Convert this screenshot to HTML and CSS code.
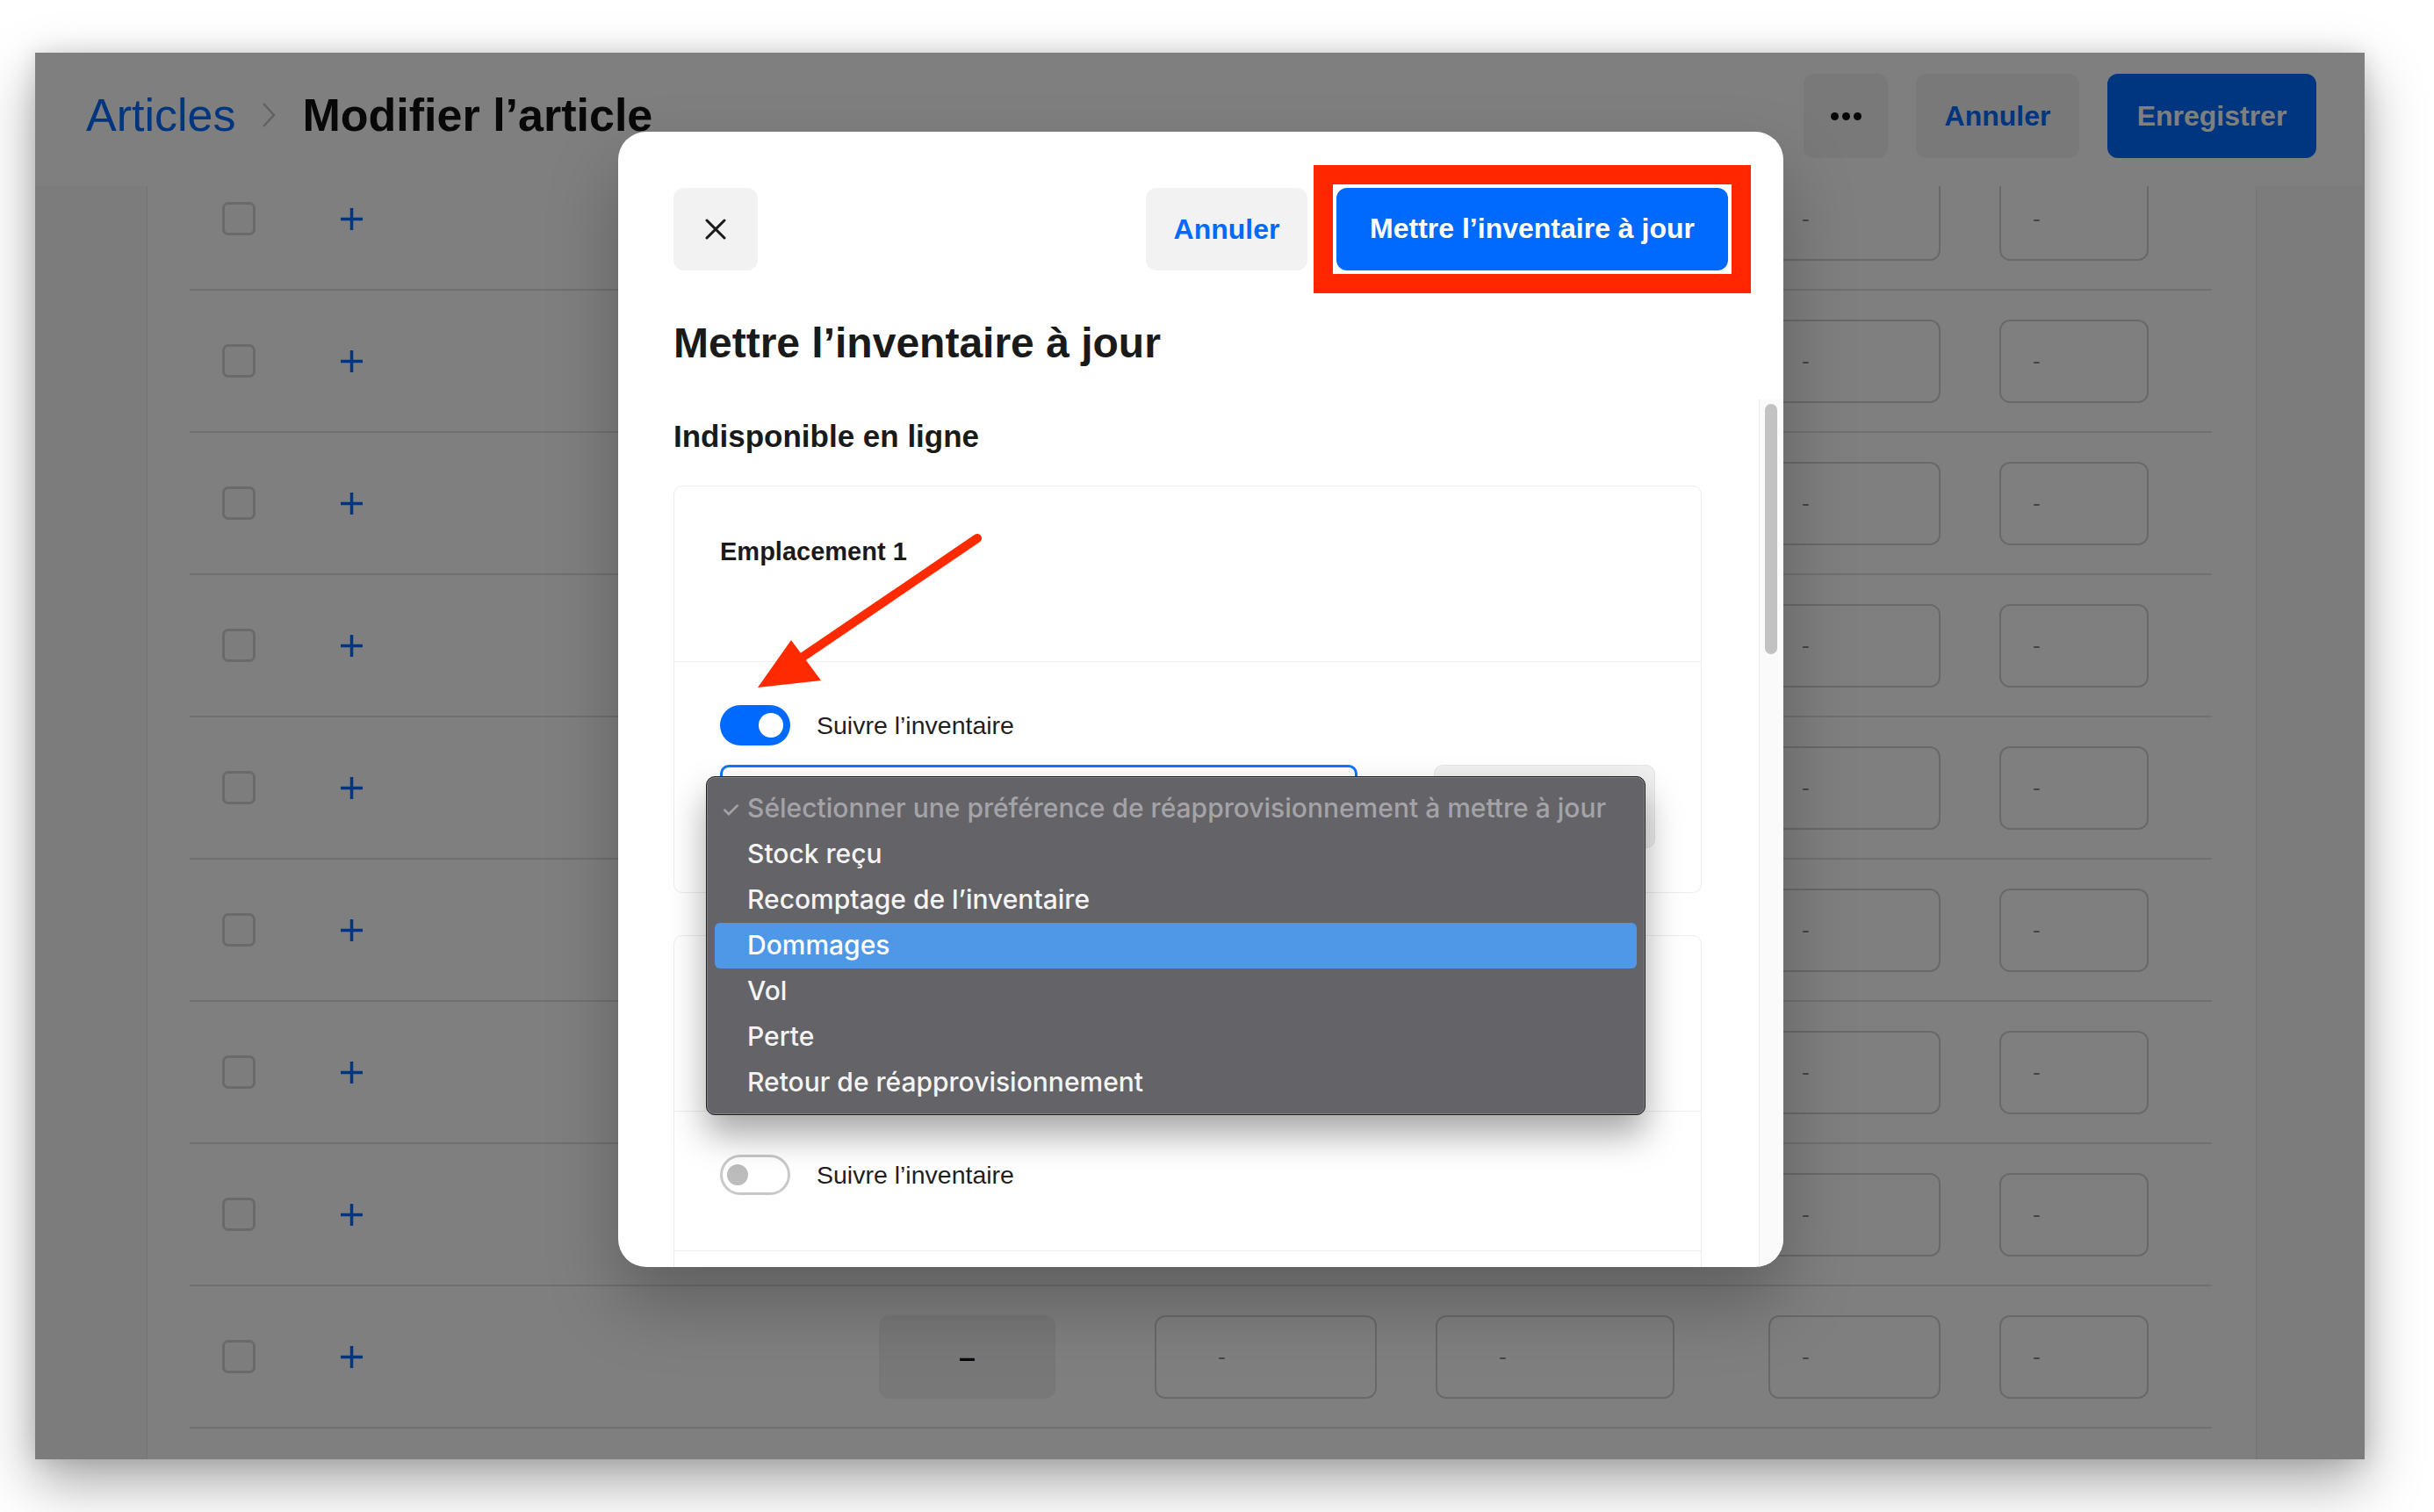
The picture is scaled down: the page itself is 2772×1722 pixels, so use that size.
FILE: index.html
```html
<!DOCTYPE html>
<html lang="fr">
<head>
  <meta charset="UTF-8" />
  <title>Modifier l’article</title>
  <link rel="stylesheet" href="styles.css">
</head>
<body>
  <div class="screen">
    <div class="window">
      <header class="topbar">
        <nav class="crumbs">
          <a class="crumb-link">Articles</a>
          <svg class="crumb-sep" width="16" height="30" viewBox="0 0 16 30"><path d="M2 2 L14 15 L2 28" fill="none" stroke="#c4c4c4" stroke-width="2.5"/></svg>
          <h1 class="crumb-current">Modifier l’article</h1>
        </nav>
        <div class="top-actions">
          <button class="btn btn-more"><span></span><span></span><span></span></button>
          <button class="btn btn-soft">Annuler</button>
          <button class="btn btn-primary">Enregistrer</button>
        </div>
      </header>

      <div class="workspace">
        <aside class="side"></aside>
        <main class="grid">
          <div class="rows" id="rows"></div>
        </main>
        <aside class="side side-right"></aside>
      </div>

      <div class="dim"></div>

      <div class="modal">
        <div class="modal-head">
          <button class="mbtn mbtn-close">
            <svg width="26" height="26" viewBox="0 0 26 26"><path d="M3 3 L23 23 M23 3 L3 23" stroke="#1a1a1a" stroke-width="3" stroke-linecap="round"/></svg>
          </button>
          <button class="mbtn mbtn-soft">Annuler</button>
          <span class="highlight"><button class="mbtn mbtn-primary">Mettre l’inventaire à jour</button></span>
        </div>
        <h2 class="modal-title">Mettre l’inventaire à jour</h2>

        <div class="modal-body">
          <div class="modal-scroll">
            <h3 class="section-title">Indisponible en ligne</h3>

            <div class="card">
              <div class="card-head">Emplacement 1</div>
              <div class="card-row">
                <label class="track">
                  <span class="switch is-on"><span class="knob"></span></span>
                  <span class="track-label">Suivre l’inventaire</span>
                </label>
                <div class="select-line">
                  <div class="select-wrap">
                    <div class="select"></div>
                    <ul class="menu">
                      <li class="menu-item is-placeholder"><span class="menu-check">✓</span>Sélectionner une préférence de réapprovisionnement à mettre à jour</li>
                      <li class="menu-item">Stock reçu</li>
                      <li class="menu-item">Recomptage de l’inventaire</li>
                      <li class="menu-item is-active">Dommages</li>
                      <li class="menu-item">Vol</li>
                      <li class="menu-item">Perte</li>
                      <li class="menu-item">Retour de réapprovisionnement</li>
                    </ul>
                  </div>
                  <button class="qty-btn"></button>
                </div>
              </div>
            </div>

            <div class="card card-second">
              <div class="card-head">Emplacement 2</div>
              <div class="card-row card-row-off">
                <label class="track">
                  <span class="switch"><span class="knob"></span></span>
                  <span class="track-label">Suivre l’inventaire</span>
                </label>
              </div>
              <div class="card-row"></div>
            </div>
          </div>
          <div class="scrollbar"><div class="thumb"></div></div>
        </div>

        <svg class="arrow" width="300" height="210" viewBox="0 0 300 210">
          <line x1="273" y1="23" x2="70" y2="161" stroke="#ff2a00" stroke-width="10" stroke-linecap="round"/>
          <polygon points="23,193 61,139 95,185" fill="#ff2a00"/>
        </svg>
      </div>
    </div>
  </div>

  <script>
    const rows = document.getElementById('rows');
    for (let i = 0; i < 9; i++) {
      const row = document.createElement('div');
      row.className = 'row';
      row.innerHTML =
        '<span class="cell-check"></span>' +
        '<svg class="cell-add" width="27" height="27" viewBox="0 0 27 27"><path d="M13.5 1 V26 M1 13.5 H26" stroke="#006aff" stroke-width="3.5"/></svg>' +
        '<span class="box box-qty">–</span>' +
        '<span class="box box-a">-</span>' +
        '<span class="box box-b">-</span>' +
        '<span class="box box-c">-</span>' +
        '<span class="box box-d">-</span>';
      rows.appendChild(row);
    }
  </script>
</body>
</html>
```

FILE: styles.css
```css
* {
  box-sizing: border-box;
}

body {
  margin: 0;
  background: #fff;
  font-family: 'Liberation Sans', Arial, sans-serif;
  color: #1a1a1a;
}

.screen {
  padding: 60px 0 0 40px;
  height: 1722px;
  overflow: hidden;
}

.window {
  position: relative;
  width: 2653px;
  height: 1602px;
  background: #fff;
  display: flex;
  flex-direction: column;
  overflow: hidden;
  box-shadow: 0 26px 60px rgba(0, 0, 0, 0.35), 0 0 24px rgba(0, 0, 0, 0.12);
}

/* top bar */
.topbar {
  height: 152px;
  flex: none;
  display: flex;
  align-items: center;
  justify-content: space-between;
  padding: 0 55px 10px 58px;
}

.crumbs {
  display: flex;
  align-items: center;
  gap: 30px;
  font-size: 52px;
}

.crumb-link {
  color: #006aff;
}

.crumb-current {
  margin: 0;
  font-size: 52px;
  font-weight: 700;
  color: #111;
}

.top-actions {
  display: flex;
  gap: 32px;
  margin-top: 2px;
}

.btn {
  height: 96px;
  border: none;
  border-radius: 12px;
  font: 700 32px 'Liberation Sans', Arial, sans-serif;
  padding: 0;
}

.btn-more {
  width: 96px;
  background: #f2f2f2;
  display: flex;
  align-items: center;
  justify-content: center;
  gap: 4px;
}

.btn-more span {
  width: 9px;
  height: 9px;
  border-radius: 50%;
  background: #111;
}

.btn-soft {
  width: 186px;
  background: #f2f2f2;
  color: #006aff;
}

.btn-primary {
  width: 238px;
  background: #006aff;
  color: #fff;
}

/* table behind the modal */
.workspace {
  flex: 1;
  display: flex;
  min-height: 0;
}

.side {
  width: 128px;
  background: #f7f8f7;
  border-right: 1px solid #ebebeb;
}

.side-right {
  width: 124px;
  border-right: none;
  border-left: 1px solid #ebebeb;
}

.grid {
  flex: 1;
  padding: 0 50px 0 48px;
  overflow: hidden;
}

.rows {
  margin-top: -43px;
}

.row {
  height: 162px;
  display: flex;
  align-items: center;
  border-bottom: 2px solid #e0e0e0;
}

.cell-check {
  width: 38px;
  height: 38px;
  margin-left: 37px;
  border: 3px solid #d4d4d4;
  border-radius: 7px;
  background: #fbfbfb;
}

.cell-add {
  margin-left: 96px;
}

.box {
  height: 95px;
  border: 2px solid #d2d2d2;
  border-radius: 12px;
  display: flex;
  align-items: center;
  padding-left: 36px;
  font-size: 26px;
  color: #8a8a8a;
}

.box-qty {
  width: 201px;
  margin-left: 587px;
  border: none;
  background: #f0f0f0;
  justify-content: center;
  padding: 0;
  font-size: 34px;
  font-weight: 700;
  color: #111;
}

.box-a { width: 253px; margin-left: 113px; padding-left: 70px; }
.box-b { width: 272px; margin-left: 67px; padding-left: 70px; }
.box-c { width: 196px; margin-left: 107px; }
.box-d { width: 170px; margin-left: 67px; }

.dim {
  position: absolute;
  inset: 0;
  background: rgba(0, 0, 0, 0.5);
}

/* modal */
.modal {
  position: absolute;
  left: 664px;
  top: 90px;
  width: 1327px;
  height: 1293px;
  background: #fff;
  border-radius: 32px;
  display: flex;
  flex-direction: column;
  overflow: hidden;
  box-shadow: 0 40px 80px rgba(0, 0, 0, 0.25);
}

.modal-head {
  display: flex;
  align-items: center;
  gap: 33px;
  padding: 64px 63px 0;
}

.mbtn {
  height: 94px;
  border: none;
  border-radius: 12px;
  font: 700 32px 'Liberation Sans', Arial, sans-serif;
  padding: 0;
}

.mbtn-close {
  width: 96px;
  margin-right: auto;
  background: #f2f2f2;
  display: flex;
  align-items: center;
  justify-content: center;
}

.mbtn-soft {
  width: 184px;
  background: #f2f2f2;
  color: #006aff;
}

.highlight {
  display: flex;
  margin: -27px -26px -26px -26px;
  padding: 4px;
  border: 22px solid #ff2600;
  background: #fff;
}

.mbtn-primary {
  width: 446px;
  background: #006aff;
  color: #fff;
}

.modal-title {
  margin: 0;
  padding: 54px 63px 0;
  font-size: 48px;
  line-height: 58px;
  font-weight: 700;
  color: #1a1a1a;
}

.modal-body {
  flex: 1;
  min-height: 0;
  margin-top: 35px;
  display: flex;
}

.modal-scroll {
  flex: 1;
  padding: 0 65px 0 63px;
  overflow: hidden;
}

.section-title {
  margin: 21px 0 35px;
  font-size: 35px;
  line-height: 42px;
  font-weight: 700;
  color: #1a1a1a;
}

.scrollbar {
  width: 28px;
  flex: none;
  background: #fafafa;
  border-left: 1px solid #ececec;
  padding: 5px 0 0 6px;
}

.thumb {
  width: 14px;
  height: 285px;
  border-radius: 7px;
  background: #c2c2c2;
}

.card {
  border: 1px solid #ececec;
  border-radius: 10px;
}

.card-second {
  margin-top: 48px;
}

.card-head {
  height: 200px;
  padding: 57px 52px 0;
  font-size: 29px;
  line-height: 34px;
  font-weight: 700;
  border-bottom: 1px solid #eeeeee;
}

.card-row {
  padding: 49px 52px 50px;
}

.card-row-off {
  padding-bottom: 63px;
  border-bottom: 1px solid #eeeeee;
}

.track {
  display: flex;
  align-items: center;
  gap: 30px;
}

.switch {
  width: 80px;
  height: 46px;
  border-radius: 23px;
  border: 3px solid #c8c8c8;
  background: #fff;
  display: flex;
  align-items: center;
  padding: 0 5px;
}

.switch .knob {
  width: 24px;
  height: 24px;
  border-radius: 50%;
  background: #bcbcbc;
}

.switch.is-on {
  border: none;
  background: #006aff;
  justify-content: flex-end;
  padding: 0 8px;
}

.switch.is-on .knob {
  width: 28px;
  height: 28px;
  background: #fff;
}

.track-label {
  font-size: 28.5px;
  color: #1f1f1f;
}

.select-line {
  display: flex;
  gap: 87px;
  margin-top: 22px;
}

.select-wrap {
  position: relative;
  flex: 1;
}

.select {
  height: 95px;
  border: 3px solid #1473ff;
  border-radius: 10px;
}

.qty-btn {
  width: 252px;
  height: 95px;
  border: 1px solid #e6e6e6;
  border-radius: 10px;
  background: #f0f0f0;
}

/* native-looking dropdown */
.menu {
  position: absolute;
  left: -16px;
  top: 13px;
  z-index: 5;
  width: 1070px;
  margin: 0;
  padding: 10px 9px;
  list-style: none;
  background: #646367;
  border: 1px solid #1f1f1f;
  border-radius: 10px;
  box-shadow: inset 0 0 0 1px rgba(255, 255, 255, 0.2), 0 22px 40px rgba(0, 0, 0, 0.35);
}

.menu-item {
  height: 52px;
  padding-top: 7px;
  line-height: 44px;
  padding-left: 37px;
  border-radius: 6px;
  font: 500 30px Inter, 'DejaVu Sans', sans-serif;
  color: #f4f4f4;
  white-space: nowrap;
}

.menu-item.is-placeholder {
  color: #a4a3a7;
}

.menu-check {
  display: inline-block;
  width: 30px;
  margin-left: -30px;
  font-size: 25px;
}

.menu-item.is-active {
  background: #4f98e7;
  color: #fff;
}

.arrow {
  position: absolute;
  left: 136px;
  top: 440px;
}
```
